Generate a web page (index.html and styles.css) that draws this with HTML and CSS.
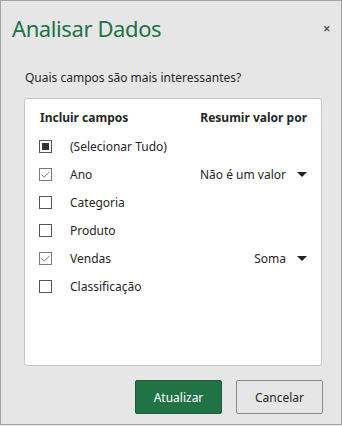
FILE: index.html
```html
<!DOCTYPE html>
<html lang="pt">
<head>
  <meta charset="UTF-8">
  <title>Analisar Dados</title>
  <link rel="stylesheet" href="styles.css">
</head>
<body>
  <div class="dialog">
    <div class="title-bar">
      <h1 class="title">Analisar Dados</h1>
      <span class="close">&#x2715;</span>
    </div>

    <p class="question">Quais campos são mais interessantes?</p>

    <div class="panel">
      <div class="row head">
        <span class="col-name">Incluir campos</span>
        <span class="col-sum">Resumir valor por</span>
      </div>

      <div class="row">
        <span class="box partial"></span>
        <span class="label">(Selecionar Tudo)</span>
      </div>
      <div class="row">
        <span class="box checked">
          <svg viewBox="0 0 13 13" width="13" height="13"><path d="M2.5 6.5 L5.2 9.2 L10.5 3.8" fill="none" stroke="#7a7a7a" stroke-width="1"/></svg>
        </span>
        <span class="label">Ano</span>
        <span class="pick">Não é um valor <span class="caret"></span></span>
      </div>
      <div class="row">
        <span class="box"></span>
        <span class="label">Categoria</span>
      </div>
      <div class="row">
        <span class="box"></span>
        <span class="label">Produto</span>
      </div>
      <div class="row">
        <span class="box checked">
          <svg viewBox="0 0 13 13" width="13" height="13"><path d="M2.5 6.5 L5.2 9.2 L10.5 3.8" fill="none" stroke="#7a7a7a" stroke-width="1"/></svg>
        </span>
        <span class="label">Vendas</span>
        <span class="pick">Soma <span class="caret"></span></span>
      </div>
      <div class="row">
        <span class="box"></span>
        <span class="label">Classificação</span>
      </div>
    </div>

    <div class="buttons">
      <button class="btn primary">Atualizar</button>
      <button class="btn">Cancelar</button>
    </div>
  </div>
</body>
</html>
```

FILE: styles.css
```css
* {
  box-sizing: border-box;
}
html, body {
  margin: 0;
  padding: 0;
}
body {
  width: 342px;
  height: 426px;
  background: #e6e6e6;
  font-family: "Noto Sans", "Open Sans", sans-serif;
  color: #262626;
}
.dialog {
  width: 342px;
  height: 425px;
  border: 1px solid #a3a3a3;
  display: flex;
  flex-direction: column;
  padding: 0 19px 10px 23px;
}
.title-bar {
  display: flex;
  justify-content: space-between;
  align-items: center;
  height: 54px;
  margin-left: -12px;
  margin-right: -9px;
}
.title {
  margin: 0;
  font-weight: normal;
  font-size: 22px;
  color: #217346;
  letter-spacing: -0.4px;
}
.close {
  font-size: 9px;
  color: #555;
  font-weight: bold;
}
.question {
  margin: 14px 0 0 1px;
  font-size: 12px;
  height: 29px;
}
.panel {
  flex: 1;
  background: #fff;
  border: 1px solid #c6c6c6;
  border-radius: 3px;
  padding: 3px 14px 0 14px;
}
.row {
  display: flex;
  align-items: center;
  height: 28px;
  font-size: 12px;
}
.row.head {
  font-weight: bold;
  justify-content: space-between;
  height: 30px;
  padding-left: 1px;
}
.box {
  width: 13px;
  height: 13px;
  border: 1px solid #555;
  position: relative;
  flex: none;
}
.box svg {
  position: absolute;
  left: -1px;
  top: -1px;
}
.box.partial::after {
  content: "";
  position: absolute;
  left: 2px;
  top: 2px;
  width: 7px;
  height: 7px;
  background: #333;
}
.box.checked {
  border-color: #7a7a7a;
}
.label {
  margin-left: 18px;
}
.pick {
  margin-left: auto;
  display: flex;
  align-items: center;
}
.caret {
  width: 0;
  height: 0;
  border-left: 5px solid transparent;
  border-right: 5px solid transparent;
  border-top: 5px solid #222;
  margin-left: 11px;
}
.buttons {
  display: flex;
  justify-content: flex-end;
  gap: 14px;
  margin-top: 14px;
  margin-right: -1px;
}
.btn {
  width: 87px;
  height: 34px;
  font-family: "Noto Sans", "Open Sans", sans-serif;
  font-size: 12px;
  color: #262626;
  background: #e6e6e6;
  border: 1px solid #8a8a8a;
  border-radius: 2px;
}
.btn.primary {
  background: #217346;
  color: #fff;
  border-color: #1c5f3a;
}
```
